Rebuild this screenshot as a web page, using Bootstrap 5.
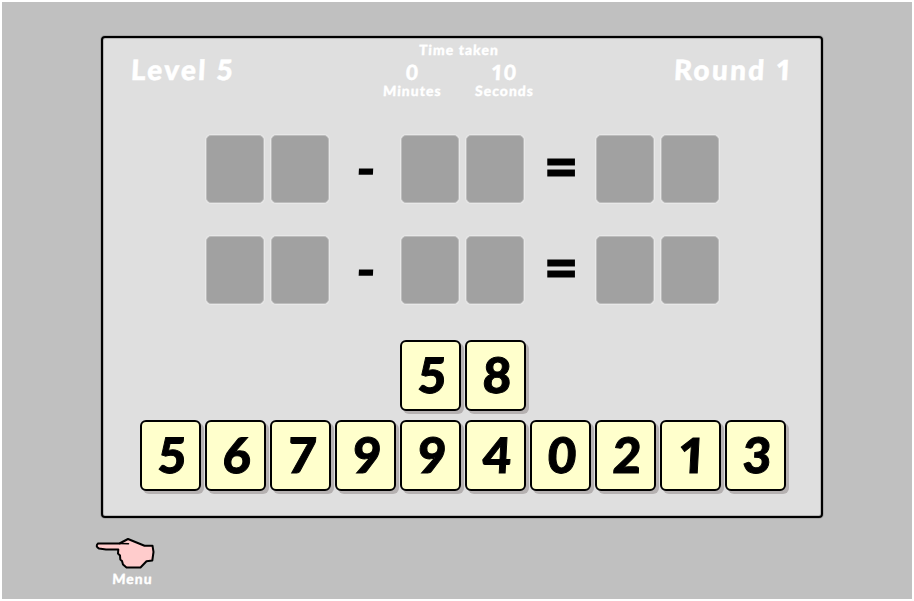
<!DOCTYPE html>
<html lang="en">
<head>
<meta charset="utf-8">
<meta name="viewport" content="width=device-width, initial-scale=1">
<title>Level 5</title>
<link href="https://cdn.jsdelivr.net/npm/bootstrap@5.3.0/dist/css/bootstrap.min.css" rel="stylesheet">
<style>
body{height:601px;padding:2px;background:#fff;overflow:hidden;font-family:Lato,"Open Sans",sans-serif;font-weight:900}
.stage{height:597px;background:#c0c0c0;padding:34px 99px 0}
.board{width:722px;height:482px;background:#dfdfdf;border:2px solid #000;border-radius:4px;box-shadow:0 0 0 1px #8d8d8d80,inset 0 0 0 1px #8d8d8d80}
.board-head{height:97px;padding:0 27px 0 28px}
.slant{display:inline-block;transform:skewX(-3deg);white-space:nowrap;line-height:1}
.title{width:121px;font-size:28px;letter-spacing:2.3px;margin-top:17px;-webkit-text-stroke:.5px #fff}
.title-end{width:129px}
.label-sm{font-size:14px;letter-spacing:1px;-webkit-text-stroke:.3px #fff}
.count{font-size:21px;letter-spacing:1px;margin:4px 0 2px;-webkit-text-stroke:.3px #fff}
.timer{width:184px;margin-top:3px}
.timer-col{width:92px;height:40px}
.one{font-family:"Noto Sans",sans-serif;font-weight:700}
.count .one,.title .one{line-height:0}
.sum{height:68px;margin-bottom:33px;padding-left:103px}
.pair{gap:7px}
.slot{width:58px;height:68px;background:#a1a1a1;border:1px solid #bcbcbc;border-radius:5px;box-shadow:0 0 0 1px #e8e8e8}
.op{width:72px;font-size:54px;line-height:1;color:#000}
.minus{padding-left:2px;padding-bottom:2px}
.equals{display:block;font-size:59px;line-height:54px;padding:0 0 6px 2px;-webkit-text-stroke:1.2px #000}
.tile{width:61px;height:71px;background:#ffc;border:2px solid #000;border-radius:6px;box-shadow:3px 3px 0 #b5b1b1;font-size:49px;color:#000;padding:0 0 3px 4px;-webkit-text-stroke:1px #000}
.tiles{gap:4px}
.tiles-top{margin-top:36px;margin-bottom:9px;padding-left:297px}
.sum-last{margin-bottom:0}
.tiles-bottom{padding-left:37px}
.menu{width:76px;margin:18px 0 0 -9px}
.menu-label{display:block;text-align:center;padding-left:5px}
</style>
<script src="https://cdn.jsdelivr.net/npm/bootstrap@5.3.0/dist/js/bootstrap.bundle.min.js"></script>
</head>
<body>
<main class="stage">
  <section class="board">
    <header class="board-head d-flex justify-content-between align-items-start text-white">
      <div class="slant title">Level 5</div>
      <div class="timer d-flex flex-wrap justify-content-center text-center">
        <div class="w-100 lh-1"><span class="slant label-sm">Time taken</span></div>
        <div class="timer-col d-flex flex-column align-items-center"><span class="slant count">0</span><span class="slant label-sm">Minutes</span></div>
        <div class="timer-col d-flex flex-column align-items-center"><span class="slant count"><span class="one">1</span>0</span><span class="slant label-sm">Seconds</span></div>
      </div>
      <div class="slant title title-end text-end">Round <span class="one">1</span></div>
    </header>
    <div class="sum d-flex align-items-center">
      <div class="pair d-flex"><div class="slot"></div><div class="slot"></div></div>
      <div class="op text-center"><span class="slant minus">-</span></div>
      <div class="pair d-flex"><div class="slot"></div><div class="slot"></div></div>
      <div class="op text-center"><span class="equals">=</span></div>
      <div class="pair d-flex"><div class="slot"></div><div class="slot"></div></div>
    </div>
    <div class="sum sum-last d-flex align-items-center">
      <div class="pair d-flex"><div class="slot"></div><div class="slot"></div></div>
      <div class="op text-center"><span class="slant minus">-</span></div>
      <div class="pair d-flex"><div class="slot"></div><div class="slot"></div></div>
      <div class="op text-center"><span class="equals">=</span></div>
      <div class="pair d-flex"><div class="slot"></div><div class="slot"></div></div>
    </div>
    <div class="tiles tiles-top d-flex">
      <div class="tile d-flex align-items-center justify-content-center"><span class="slant">5</span></div>
      <div class="tile d-flex align-items-center justify-content-center"><span class="slant">8</span></div>
    </div>
    <div class="tiles tiles-bottom d-flex">
      <div class="tile d-flex align-items-center justify-content-center"><span class="slant">5</span></div>
      <div class="tile d-flex align-items-center justify-content-center"><span class="slant">6</span></div>
      <div class="tile d-flex align-items-center justify-content-center"><span class="slant">7</span></div>
      <div class="tile d-flex align-items-center justify-content-center"><span class="slant">9</span></div>
      <div class="tile d-flex align-items-center justify-content-center"><span class="slant">9</span></div>
      <div class="tile d-flex align-items-center justify-content-center"><span class="slant">4</span></div>
      <div class="tile d-flex align-items-center justify-content-center"><span class="slant">0</span></div>
      <div class="tile d-flex align-items-center justify-content-center"><span class="slant">2</span></div>
      <div class="tile d-flex align-items-center justify-content-center"><span class="slant one">1</span></div>
      <div class="tile d-flex align-items-center justify-content-center"><span class="slant">3</span></div>
    </div>
  </section>
  <div class="menu text-white">
    <svg class="d-block" width="68" height="36" viewBox="0 0 68 36" fill="#fcc" stroke="#000" stroke-width="2" stroke-linejoin="round" stroke-linecap="round">
      <path d="M6 7.500 27.500 7.500 36 3 52.500 9.700 60.500 9.700 61.500 16 60.300 24.500 54.500 25.200 48.500 31.500 34.500 31.500 31 28.500 30 25 28.300 23.500 28 19.500 26 17.500 26.300 13.500 14 13.400 7 12.500Q3 10.500 6 7.500Z"/>
      <path d="M27.500 7.500 36.500 7.700" fill="none" stroke-width="1.500"/>
    </svg>
    <span class="slant label-sm menu-label">Menu</span>
  </div>
</main>
</body>
</html>
